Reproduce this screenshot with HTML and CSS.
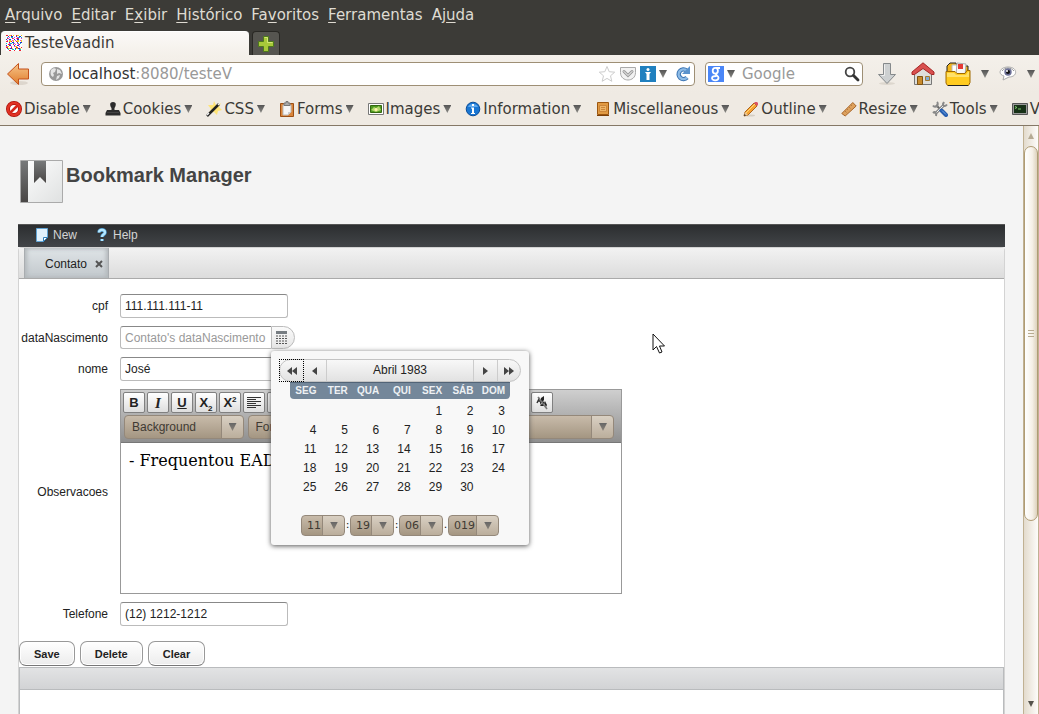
FILE: index.html
```html
<!DOCTYPE html>
<html lang="pt-BR">
<head>
<meta charset="utf-8">
<title>TesteVaadin</title>
<link rel="stylesheet" href="styles.css">
</head>
<body>
<header class="browser">
  <nav class="menubar">
    <button><u>A</u>rquivo</button><button><u>E</u>ditar</button><button>E<u>x</u>ibir</button><button><u>H</u>istórico</button><button>Fa<u>v</u>oritos</button><button><u>F</u>erramentas</button><button>Aj<u>u</u>da</button>
  </nav>
  <div class="tabs">
    <button class="tab">
      <svg width="16" height="16" viewBox="0 0 16 16"><path fill="#fff" d="M0 0h16v16H0z"/><g fill="none" stroke-width="1.200"><path stroke="#e23" stroke-dasharray="2 3 1 4" d="M0 .5h16M1 3.500h15M0 6.500h16M2 9.500h14M0 12.500h16M3 15.500h13"/><path stroke="#23c" stroke-dasharray="1 2 2 3" d="M2 1.500h14M0 4.500h16M3 7.500h13M0 10.500h16M1 13.500h15"/><path stroke="#1bc" stroke-dasharray="1 3 2 1" d="M1 2.500h15M0 8.500h16M2 14.500h14"/><path stroke="#ec2" stroke-dasharray="2 2 1 3" d="M3 5.500h13M1 11.500h15M3 .5h13M2 13.500h14M3 6.500h13"/><path stroke="#e3c" stroke-dasharray="1 4 1 2" d="M3 2.500h13M1 5.500h15M3 8.500h13M0 11.500h16M2 3.500h14M4 9.500h12"/></g></svg>
      TesteVaadin
    </button>
    <button class="new-tab" aria-label="Nova aba"><svg width="16" height="16" viewBox="0 0 16 16"><path d="M5.500 .5h5v5h5v5h-5v5h-5v-5h-5v-5h5z" fill="#a8c93a" stroke="#4e7a1c"/><path d="M6.500 1.500h3v5h5" fill="none" stroke="#d3e676"/></svg></button>
  </div>
  <div class="navbar">
    <button class="back" aria-label="Voltar"><svg width="24" height="24" viewBox="0 0 24 24"><defs><linearGradient id="or" x2="0" y2="1"><stop stop-color="#f7c58a"/><stop offset="1" stop-color="#e07d2c"/></linearGradient></defs><ellipse cx="13" cy="21" rx="9" ry="2" fill="#ddd6cd"/><path d="M1.500 12 12.500 1.500V7h10v10h-10v5.500z" fill="url(#or)" stroke="#c4511b"/></svg></button>
    <div class="url">
      <svg width="16" height="16" viewBox="0 0 16 16"><circle cx="8" cy="8" r="7" fill="#999"/><path d="M3 4c2-2 4-2 5-1L7 6 5 7l1 2-1 2C3 10 2 8 3 4zM9 3l3 1 2 4-3-1-2 1zM9 10l3-1-1 3-3 2z" fill="#e5e5e5"/></svg>
      <div class="address" role="textbox" aria-label="Endereço" contenteditable="true" spellcheck="false">localhost<span>:8080/testeV</span></div>
      <svg width="18" height="18" viewBox="0 0 18 18"><path d="M9 1.500 11.200 6.700 16.700 7.200 12.500 10.800 13.800 16.300 9 13.400 4.200 16.300 5.500 10.800 1.300 7.200 6.800 6.700z" fill="#fff" stroke="#ccc"/></svg>
      <svg width="18" height="16" viewBox="0 0 18 16"><path d="M1.500 1.500h15v5c0 10-15 10-15 0z" fill="#f2f2f2" stroke="#aaa"/><path d="M5 5.500 9 9.500l4-4" fill="none" stroke="#999" stroke-width="3" stroke-linecap="round"/><path d="M5 5.500 9 9.500l4-4" fill="none" stroke="#fff" stroke-linecap="round"/></svg>
      <svg width="16" height="16" viewBox="0 0 16 16"><path fill="#2080bf" d="M0 0h16v16H0z"/><circle cx="8" cy="3.500" r="1.500" fill="#fff"/><path fill="#fff" d="M5 6h6L9.500 8v6h-3V8z"/></svg>
      <span class="tri"></span>
      <svg class="reload" width="16" height="16" viewBox="0 0 16 16"><path d="M11.500 4.500A4.800 4.800 0 1 0 12 11.500" fill="none" stroke="#3b74b3" stroke-width="4.500"/><path d="M11.500 4.500A4.800 4.800 0 1 0 12 11.500" fill="none" stroke="#8dbbe6" stroke-width="2.500"/><path d="M15 0v8H7z" fill="#5b93cd"/></svg>
    </div>
    <div class="search">
      <svg width="16" height="16" viewBox="0 0 16 16"><path fill="#4a86f7" d="M0 0h16v16H0z"/><g fill="none" stroke="#fff" stroke-width="1.800"><ellipse cx="7.300" cy="4.800" rx="2.600" ry="2.900"/><path d="M8 2h4M9 7.500c-3 1.500 1.500 2 1.500 4.300 0 3.300-6.500 3.300-6.500.4C4 10.300 6.500 10 8.500 10"/></g></svg>
      <span class="tri"></span>
      <input type="search" placeholder="Google" aria-label="Pesquisar">
      <svg width="16" height="16" viewBox="0 0 16 16"><circle cx="6" cy="6" r="4.300" fill="#fff" stroke="#444" stroke-width="1.800"/><path d="m9.500 9.500 4.500 4.500" stroke="#333" stroke-width="2.800" stroke-linecap="round"/></svg>
    </div>
    <div class="actions">
      <button aria-label="Downloads"><svg width="20" height="24" viewBox="0 0 20 24"><ellipse cx="10" cy="21.500" rx="8" ry="1.500" fill="#ddd7ce"/><path d="M6.500 1.500h7v11h5L10 21.500l-8.500-9h5z" fill="#cdd0d1" stroke="#85898b"/><path d="M7.500 2.500v11h-3" fill="none" stroke="#eee"/></svg></button>
      <button aria-label="Página inicial"><svg width="24" height="24" viewBox="0 0 24 24"><path d="M3.500 11 12 4l8.500 7v11.500h-17z" fill="#dededb" stroke="#777"/><path d="M6.500 14.500h5v8h-5z" fill="#c98b2d" stroke="#7e5312"/><path d="M14.500 14.500h4v4h-4z" fill="#7eacd6" stroke="#a5792f"/><path d="M1 12.500V10L12 .8 23 10v2.500h-2.500L12 6.500 3.500 12.500z" fill="#d9504f" stroke="#a52726"/></svg></button>
      <button aria-label="Pasta"><svg width="26" height="26" viewBox="0 0 26 26"><path d="M2 10V5l3-3h6l1 3h11v8" fill="#f3b61d" stroke="#222"/><path d="M7 4h7v9H7z" fill="#fff" stroke="#bbb"/><path d="m12 2 9 1-1 12-9-1z" fill="#f5f5f5" stroke="#aaa"/><path d="M13 3h5v5h-5z" fill="#e53935"/><path d="M1 10.500h9l2 2h8l2-3h3v12l-1.500 3h-21L1 22z" fill="#ffcb21" stroke="#a06a00"/><path d="M2 12h7l2 2h10l2-3h1v5H2z" fill="#ffe16b"/><path d="M3 24.500h20" stroke="#222"/></svg></button>
      <span class="tri"></span>
      <button aria-label="Visualizar"><svg width="18" height="18" viewBox="0 0 18 18"><path d="M9 2c10 0 10 10 1 10l-6 3 1-4C-2 9 1 2 9 2z" fill="#fff" stroke="#aaa"/><path d="M3 6c3-4 9-4 12 0" fill="none" stroke="#999"/><circle cx="9" cy="7" r="3.700" fill="#6b6f96"/><circle cx="9" cy="7" r="2" fill="#111"/><circle cx="8" cy="6" r="1" fill="#fff"/></svg></button>
      <span class="tri"></span>
    </div>
  </div>
  <div class="devbar">
    <button><svg width="16" height="16" viewBox="0 0 16 16"><circle cx="8" cy="8" r="6" fill="#fff" stroke="#a90f08" stroke-width="4"/><circle cx="8" cy="8" r="6" fill="none" stroke="#e23224" stroke-width="2.500"/><path d="m4 12 8-8" stroke="#d6261a" stroke-width="2.500"/></svg>Disable<span class="tri"></span></button>
    <button><svg width="16" height="16" viewBox="0 0 16 16"><path d="M8 1c4 0 3 4 1.500 6v2H14l1.500 3v2.500H.5V12L2 9h4.500V7C5 5 4 1 8 1z" fill="#2c2c2c"/><path d="M2 11.500h12" stroke="#444"/></svg>Cookies<span class="tri"></span></button>
    <button><svg width="16" height="16" viewBox="0 0 16 16"><path d="m8 0 2 4 5-2-2 4 3 3-4 1-1 4-3-3-5 1 2-4-3-4 5 0z" fill="#ffe477"/><path d="m1 15 12-12" stroke="#222" stroke-width="2.500"/><path d="m1 14 2-2M12 4l2-2" stroke="#eee" stroke-width="1.500"/></svg>CSS<span class="tri"></span></button>
    <button><svg width="16" height="16" viewBox="0 0 16 16"><path d="M1.500 2.500h13v13h-13z" fill="#d9853b" stroke="#9c4f14"/><path d="M4 4h8v7l-3 3H4z" fill="#f6f6f6" stroke="#bbb"/><path d="m9 14 3-3H9z" fill="#ccc"/><path d="M5 4.500V2h2V.5h2V2h2v2.500z" fill="#aaa" stroke="#777"/></svg>Forms<span class="tri"></span></button>
    <button><svg width="16" height="16" viewBox="0 0 16 16"><path d="M.5 2.500h15v11H.5z" fill="#fff" stroke="#777"/><path d="M2.500 4.500h11v7h-11z" fill="#4f9a20" stroke="#34680f"/><path d="m3 9 3-3 2 1 3-2 2 4-5 2z" fill="#b2d76b"/><circle cx="8" cy="8.500" r="1.500" fill="#fff3ae"/></svg>Images<span class="tri"></span></button>
    <button><svg width="16" height="16" viewBox="0 0 16 16"><circle cx="8" cy="8" r="6.800" fill="#1976d2" stroke="#0c4d98"/><path d="M3 6c1-4 9-4 10 0" fill="#5fa9ee"/><path d="M7 3h2v2H7zM6 6.500h3V12h1v1H6v-1h1V7.500H6z" fill="#fff"/></svg>Information<span class="tri"></span></button>
    <button><svg width="16" height="16" viewBox="0 0 16 16"><path d="M2.500 1.500h11v12h-11z" fill="#e19a43" stroke="#9c560f"/><path d="M2 14.500h12" stroke="#7b3f08"/><path d="M4.500 4.500h7v6h-7zM6 6.500h4M6 8.500h4" fill="#edb568" stroke="#cd8639"/></svg>Miscellaneous<span class="tri"></span></button>
    <button><svg width="16" height="16" viewBox="0 0 16 16"><ellipse cx="7" cy="14.500" rx="5" ry="1" fill="#d5cec3"/><path d="m1 15 1-4 9-9 3 3-9 9z" fill="#f6a233" stroke="#ae651b"/><path d="m3 12 9-9" stroke="#ffda75"/><path d="m11 2 1-1h2l1 1v2l-1 1z" fill="#dc5465"/><path d="m1 15 1-4 3 3z" fill="#e9c99d"/><path d="m1 15 .5-2L3 14.500z" fill="#222"/></svg>Outline<span class="tri"></span></button>
    <button><svg width="16" height="16" viewBox="0 0 16 16"><path d="m.8 12.500 11-11L15.200 5l-11 10z" fill="#dda15d" stroke="#a7652a"/><path d="m4 10 1.500 1.500M6 8l1 1M8 6l1.500 1.500M10 4l1 1" stroke="#b67a40"/></svg>Resize<span class="tri"></span></button>
    <button><svg width="16" height="16" viewBox="0 0 16 16"><path d="m4 4 8 8" stroke="#666" stroke-width="2"/><path d="m3 13 9-9" stroke="#888" stroke-width="3"/><path d="m3 13 9-9" stroke="#eee"/><path d="M1 4.500C2 6 4 6 5 5s1-3 0-4M15 3.500C13 6 11 5 11 3l1-2M1 12c2-2 4 0 3 3" fill="none" stroke="#888" stroke-width="2"/><path d="m9.500 9.500 4.500 4.500" stroke="#275eb0" stroke-width="4" stroke-linecap="round"/><path d="m10 9.500 4 4" stroke="#6fa7eb"/></svg>Tools<span class="tri"></span></button>
    <button><svg width="16" height="16" viewBox="0 0 16 16"><path d="M.5 2.500h15v11H.5z" fill="#999" stroke="#555"/><path d="M2 4h12v8H2z" fill="#173117"/><path d="m3 5.500 2 1-2 1M6 8h3" fill="none" stroke="#7dcc6d"/></svg>View Source<span class="tri"></span></button>
  </div>
</header>

<div class="viewport">
  <main class="page">
    <div class="brand">
      <svg width="44" height="44" viewBox="0 0 44 44"><defs><linearGradient id="bk" x2="1" y2="1"><stop stop-color="#fff"/><stop offset="1" stop-color="#dfe1e1"/></linearGradient><linearGradient id="dk" x2="0" y2="1"><stop stop-color="#77797a"/><stop offset="1" stop-color="#494645"/></linearGradient></defs><path d="M.5.500h42v42H.5z" fill="url(#bk)" stroke="#aaa"/><path d="M1 1h7v41H1z" fill="url(#dk)"/><path d="M14 1h12v22l-6-6-6 6z" fill="url(#dk)"/></svg>
      <h1>Bookmark Manager</h1>
    </div>
    <nav class="appbar">
      <button><svg width="12" height="14" viewBox="0 0 12 14"><path d="M.5.500h11v9l-4 4h-7z" fill="#e1f1fc" stroke="#61a4d5"/><path d="M7.500 13.500v-4h4z" fill="#fff" stroke="#3381ba"/></svg>New</button>
      <button><svg width="12" height="14" viewBox="0 0 12 14"><path d="M3 4.500C3 1 9 1 9 4.500 9 6.500 6 6.500 6 9M6 11v2" fill="none" stroke="#4e9bd0" stroke-width="3.600"/><path d="M3 4.500C3 1 9 1 9 4.500 9 6.500 6 6.500 6 9M6 11v2" fill="none" stroke="#b5e8ff" stroke-width="2.200"/></svg>Help</button>
    </nav>
    <section class="panel">
      <div class="tabstrip">
        <div class="sheet"><button>Contato</button><button aria-label="Fechar"><svg width="8" height="8" viewBox="0 0 8 8"><path d="m1 1 6 6m0-6L1 7" stroke="#555" stroke-width="2"/></svg></button></div>
      </div>
      <form class="form">
        <label for="cpf">cpf</label>
        <input class="field" id="cpf" type="text" value="111.111.111-11">

        <label for="data">dataNascimento</label>
        <div class="date">
          <input class="field" id="data" type="text" placeholder="Contato's dataNascimento">
          <button type="button" class="cal-button" aria-label="Calendário"><svg width="11" height="13" viewBox="0 0 11 13"><path d="M0 0h11v3H0z" fill="#777d82"/><path d="M0 5h11M0 7.500h11M0 10h11M0 12.500h11" stroke="#555" stroke-dasharray="2 1"/></svg></button>
          <div class="popup">
            <div class="month">
              <button type="button" class="focused" aria-label="Ano anterior"><svg width="10" height="8" viewBox="0 0 10 8"><path d="M5 0v8L0 4zM10 0v8L5 4z"/></svg></button>
              <button type="button" aria-label="Mês anterior"><svg width="5" height="8" viewBox="0 0 5 8"><path d="M5 0v8L0 4z"/></svg></button>
              <span>Abril 1983</span>
              <button type="button" aria-label="Próximo mês"><svg width="5" height="8" viewBox="0 0 5 8"><path d="M0 0v8l5-4z"/></svg></button>
              <button type="button" class="last" aria-label="Próximo ano"><svg width="10" height="8" viewBox="0 0 10 8"><path d="M0 0v8l5-4zM5 0v8l5-4z"/></svg></button>
            </div>
            <table class="days">
              <thead><tr><th>SEG</th><th>TER</th><th>QUA</th><th>QUI</th><th>SEX</th><th>SÁB</th><th>DOM</th></tr></thead>
              <tbody>
                <tr><td></td><td></td><td></td><td></td><td>1</td><td>2</td><td>3</td></tr>
                <tr><td>4</td><td>5</td><td>6</td><td>7</td><td>8</td><td>9</td><td>10</td></tr>
                <tr><td>11</td><td>12</td><td>13</td><td>14</td><td>15</td><td>16</td><td>17</td></tr>
                <tr><td>18</td><td>19</td><td>20</td><td>21</td><td>22</td><td>23</td><td>24</td></tr>
                <tr><td>25</td><td>26</td><td>27</td><td>28</td><td>29</td><td>30</td><td></td></tr>
              </tbody>
            </table>
            <div class="time">
              <span class="combo"><select aria-label="Hora"><option>11</option></select></span><span class="sep">:</span>
              <span class="combo"><select aria-label="Minuto"><option>19</option></select></span><span class="sep">:</span>
              <span class="combo"><select aria-label="Segundo"><option>06</option></select></span><span class="sep">.</span>
              <span class="combo wide"><select aria-label="Milissegundo"><option>019</option></select></span>
            </div>
          </div>
        </div>

        <label for="nome">nome</label>
        <input class="field" id="nome" type="text" value="José">

        <label for="obs">Observacoes</label>
        <div class="editor">
          <div class="tools">
            <div class="formats">
              <button type="button"><b>B</b></button><button type="button"><b class="serif">I</b></button><button type="button"><b class="under">U</b></button><button type="button"><b>X<sub>2</sub></b></button><button type="button"><b>X<sup>2</sup></b></button>
              <button type="button" aria-label="Alinhar"><svg width="14" height="12" viewBox="0 0 14 12"><path d="M0 .5h14M0 2.500h9M0 4.500h14M0 6.500h9M0 8.500h14M0 10.500h9" stroke="#333"/></svg></button>
              <button type="button"></button><button type="button"></button><button type="button"></button><button type="button"></button><button type="button"></button><button type="button"></button><button type="button"></button><button type="button"></button><button type="button"></button><button type="button"></button><button type="button"></button>
              <button type="button" aria-label="Remover formato"><svg width="12" height="14" viewBox="0 0 12 14"><path d="m1 7 2-4 2 4M2 5h2" fill="none" stroke="#333" stroke-width="1.500"/><path d="m5 2 3-2v4L4 9zM4 10l4-5v5zM9 5l2 4-1 2-2-4z" fill="#222"/><path d="m2 1 9 12" stroke="#777" stroke-width="1.500"/></svg></button>
            </div>
            <div class="styles">
              <span class="combo"><select aria-label="Cor de fundo"><option>Background</option></select></span>
              <span class="combo"><select aria-label="Cor do texto"><option>Foreground</option></select></span>
              <span class="combo"><select aria-label="Fonte"><option>Font</option></select></span>
              <span class="combo"><select aria-label="Tamanho"><option>Size</option></select></span>
            </div>
          </div>
          <textarea id="obs" spellcheck="false">- Frequentou EAD</textarea>
        </div>

        <label for="tel">Telefone</label>
        <input class="field" id="tel" type="text" value="(12) 1212-1212">
      </form>
      <div class="buttons"><button>Save</button><button>Delete</button><button>Clear</button></div>
      <div class="grid"><div class="grid-head"></div></div>
    </section>
  </main>
  <div class="scroll">
    <span class="arrow up"></span>
    <div class="track"><div class="thumb"><i></i><i></i><i></i></div></div>
    <span class="arrow"></span>
  </div>
</div>
<svg class="pointer" width="13" height="21" viewBox="0 0 13 21"><path d="M1 1v16l3.500-3.500L7.500 20l2.500-1-2.500-6h5z" fill="#fff" stroke="#111"/></svg>
</body>
</html>
```

FILE: styles.css
```css
* { box-sizing: border-box; }
body {
  margin: 0;
  height: 100vh;
  display: flex;
  flex-direction: column;
  overflow: hidden;
  font: 12px/16px "Liberation Sans", Arial, sans-serif;
  color: #222;
  background: #f4f4f4;
}
button { font: inherit; color: inherit; background: none; border: 0; padding: 0; }
svg { display: block; flex: none; }
input, textarea, select { font: inherit; color: inherit; min-width: 0; }

/* Browser chrome */
.browser { font: 15px/20px "DejaVu Sans", sans-serif; flex: none; border-bottom: 1px solid #857866; background: #efeae3; }
.menubar { display: flex; gap: 9px; height: 30px; padding: 0 5px; align-items: center; background: #3c3b37; color: #dfdbd2; }
.menubar u { text-underline-offset: 2px; }
.tabs { display: flex; gap: 3px; height: 25px; padding: 1px 1px 0; background: #3c3b37; }
.tab { display: flex; align-items: center; gap: 3px; width: 248px; padding: 0 0 2px 5px; background: linear-gradient(#fbf9f7, #f4f0ea); border-radius: 4px 4px 0 0; border-top: 1px solid #fff; color: #3c3b37; }
.new-tab { display: grid; place-items: center; width: 28px; background: #565550; border: 1px solid #292824; border-bottom: 0; border-radius: 4px 4px 0 0; }
.navbar { display: flex; align-items: center; height: 38px; padding: 0 4px 0 6px; background: linear-gradient(#f4f0ea, #efeae3); }
.back { margin-right: 11px; }
.url, .search { display: flex; align-items: center; height: 24px; background: #fff; border: 1px solid #9e8f75; border-radius: 4px; }
.url { flex: 1; padding: 0 3px 0 6px; gap: 3px; }
.address { flex: 1; margin-left: 1px; outline: 0; white-space: nowrap; color: #333; }
.address span { color: #999; }
.reload { margin-left: 5px; }
.search { width: 158px; margin: 0 14px 0 10px; padding: 0 2px; gap: 3px; }
.search input { flex: 1; border: 0; outline: 0; background: none; padding: 0 0 0 4px; }
.search input::placeholder { color: #999; opacity: 1; }
.actions { display: flex; align-items: center; gap: 10px; }
.actions button:first-child { margin-right: 4px; }
.tri { flex: none; width: 8px; height: 8px; background: linear-gradient(#555, #8a8985); clip-path: polygon(0 0, 100% 0, 50% 100%); }
.devbar { display: flex; gap: 14px; height: 32px; padding-left: 6px; overflow: hidden; color: #3c3b37; }
.devbar button { display: flex; align-items: center; gap: 2px; flex: none; }
.devbar .tri { margin-left: 1px; }

/* Page */
.viewport { flex: 1; min-height: 0; display: flex; }
.page { flex: 1; display: flex; flex-direction: column; min-width: 0; padding: 34px 18px 0; }
.brand { display: flex; gap: 2px; height: 64px; padding-left: 2px; flex: none; }
h1 { margin: 2px 0 0; font-size: 20px; line-height: 26px; color: #444; }
.appbar { display: flex; gap: 19px; height: 23px; flex: none; padding: 0 0 2px 18px; background: linear-gradient(#2c2e30, #424548); border-top: 1px solid #555; color: #d4d4d4; text-shadow: 0 1px 0 #000; }
.appbar button { display: flex; align-items: center; gap: 5px; }
.panel { flex: 1; display: flex; flex-direction: column; min-height: 0; background: #fff; border: 1px solid #d3d3d3; border-bottom: 0; border-radius: 4px 4px 0 0; }
.tabstrip { flex: none; height: 31px; padding-left: 5px; display: flex; border-bottom: 1px solid #aaa; background: linear-gradient(#f2f2f2, #dcdcdc); }
.sheet { display: flex; align-items: center; gap: 8px; padding: 2px 5px 0 20px; border: solid #a9adb0; border-width: 0 1px; background: linear-gradient(#dfe4e7, #c2c8cc); box-shadow: inset 2px 0 4px #b3b8bb, inset -2px 0 4px #b3b8bb; text-shadow: 0 1px 0 #fff; }
.form { display: grid; grid-template-columns: 89px 502px; gap: 8px 12px; align-items: center; padding-top: 15px; }
.form label { text-align: right; }
.field { width: 168px; height: 24px; padding: 0 4px; border: 1px solid #bbb; border-top-color: #888; border-radius: 3px; background: #fff; outline: 0; }
.field::placeholder { color: #999; opacity: 1; }
.date { position: relative; display: flex; height: 23px; }
.date > .field { width: 151px; height: 23px; border-radius: 3px 0 0 3px; border-right: 0; }
.cal-button { display: grid; place-items: center; width: 24px; padding-right: 4px; border: 1px solid #bbb; border-radius: 0 12px 12px 0; background: linear-gradient(#fafafa, #e6e6e6); }

/* Rich text editor */
.editor { height: 205px; display: flex; flex-direction: column; border: 1px solid #999; }
.tools { padding: 2px; height: 53px; border-bottom: 1px solid #777; background: linear-gradient(#cfcfcf, #8f8f8f); }
.formats { display: flex; gap: 2px; height: 21px; }
.formats button { display: grid; place-items: center; width: 22px; border: 1px solid #808080; border-radius: 2px; background: linear-gradient(#fff, #dedede); font-size: 13px; line-height: 14px; }
.formats sub, .formats sup { font-size: 8px; line-height: 0; }
.serif { font-family: "Liberation Serif", serif; font-style: italic; font-size: 15px; }
.under { text-decoration: underline; }
.styles { display: grid; grid-template-columns: repeat(4, 1fr); gap: 4px; padding: 2px 5px 0 1px; }
.combo { position: relative; display: block; color: #3f3a33; }
.combo select { display: block; width: 100%; height: 24px; padding: 0 22px 0 7px; appearance: none; outline: 0; border: 1px solid #94887a; border-radius: 4px; background: linear-gradient(#94887a, #94887a) right 21px top / 1px 100% no-repeat, linear-gradient(#d9d0c3, #bbae9c) right / 21px 100% no-repeat, linear-gradient(#c8bbaa, #a49682); }
.combo::after { content: ""; position: absolute; right: 7px; top: 50%; margin-top: -4px; width: 8px; height: 8px; background: linear-gradient(#666, #8a8379); clip-path: polygon(0 0, 100% 0, 50% 100%); pointer-events: none; }
textarea { flex: 1; resize: none; border: 0; outline: 0; padding: 8px; font: 16px/20px "DejaVu Serif", serif; color: #000; }

/* Calendar popup */
.popup { position: absolute; z-index: 2; left: 151px; top: 25px; width: 258px; height: 194px; padding: 8px 8px 0; border-radius: 3px; background: #f8f8f8; box-shadow: 0 1px 5px #555; }
.month { display: flex; height: 23px; border: 1px solid #c4c4c4; border-radius: 12px; background: linear-gradient(#f8f8f8, #e2e2e2); }
.month button { display: grid; place-items: center; width: 23px; fill: #444; }
.month span { flex: 1; text-align: center; line-height: 21px; border: solid #ccc; border-width: 0 1px; }
.month .focused { outline: 1px dotted #000; }
.month .last { border-left: 1px solid #ccc; }
.days { width: 220px; margin: 0 auto; border-spacing: 0; table-layout: fixed; text-align: right; }
.days th { height: 17px; padding: 0 5px 0 0; text-align: right; font-size: 10px; line-height: 16px; color: #eef1f4; background: #74879a; border-top: 1px solid #526477; }
.days th:first-child { border-bottom-left-radius: 4px; }
.days th:last-child { border-bottom-right-radius: 4px; }
.days td { height: 19px; padding: 0 5px 0 0; line-height: 19px; }
.days tr:first-child td { padding-top: 3px; }
.time { display: flex; margin: 18px 22px 0; font: 11px/20px "DejaVu Sans", sans-serif; }
.time .combo { width: 44px; }
.time .wide { width: 51px; }
.time .combo select { height: 21px; padding: 0 0 0 5px; }
.sep { width: 5px; text-align: center; }

.buttons { display: flex; gap: 5px; margin-top: 15px; flex: none; }
.buttons button { height: 25px; padding: 0 14px; font-size: 11px; font-weight: bold; border: 1px solid #999; border-bottom-color: #777; border-radius: 7px; background: linear-gradient(#fff, #ececec); box-shadow: inset 0 0 0 1px #fff; }
.grid { flex: 1; margin-top: 1px; border: 1px solid #b9bbbd; border-bottom: 0; }
.grid-head { height: 22px; border-bottom: 1px solid #b9bbbd; background: linear-gradient(#e2e3e4, #d2d3d5); }

/* Scroll bar */
.scroll { display: flex; flex-direction: column; width: 16px; border: solid #c0b193; border-width: 0 1px; background: linear-gradient(90deg, #e3dbcd, #fdfcfa); }
.arrow { height: 20px; display: grid; place-items: center; }
.arrow::after { content: ""; width: 6px; height: 6px; background: #55534c; clip-path: polygon(0 0, 100% 0, 50% 100%); }
.up::after { background: #b5aa94; clip-path: polygon(50% 0, 100% 100%, 0 100%); }
.track { flex: 1; }
.thumb { height: 68.500%; display: flex; flex-direction: column; align-items: center; justify-content: center; gap: 2px; border: 1px solid #b09c74; border-radius: 7px; background: linear-gradient(90deg, #fff, #f6f1e8 60%, #ddd2bd); }
.thumb i { width: 6px; height: 1px; background: #b8ab90; }
.pointer { position: absolute; left: 652px; top: 333px; }
```
